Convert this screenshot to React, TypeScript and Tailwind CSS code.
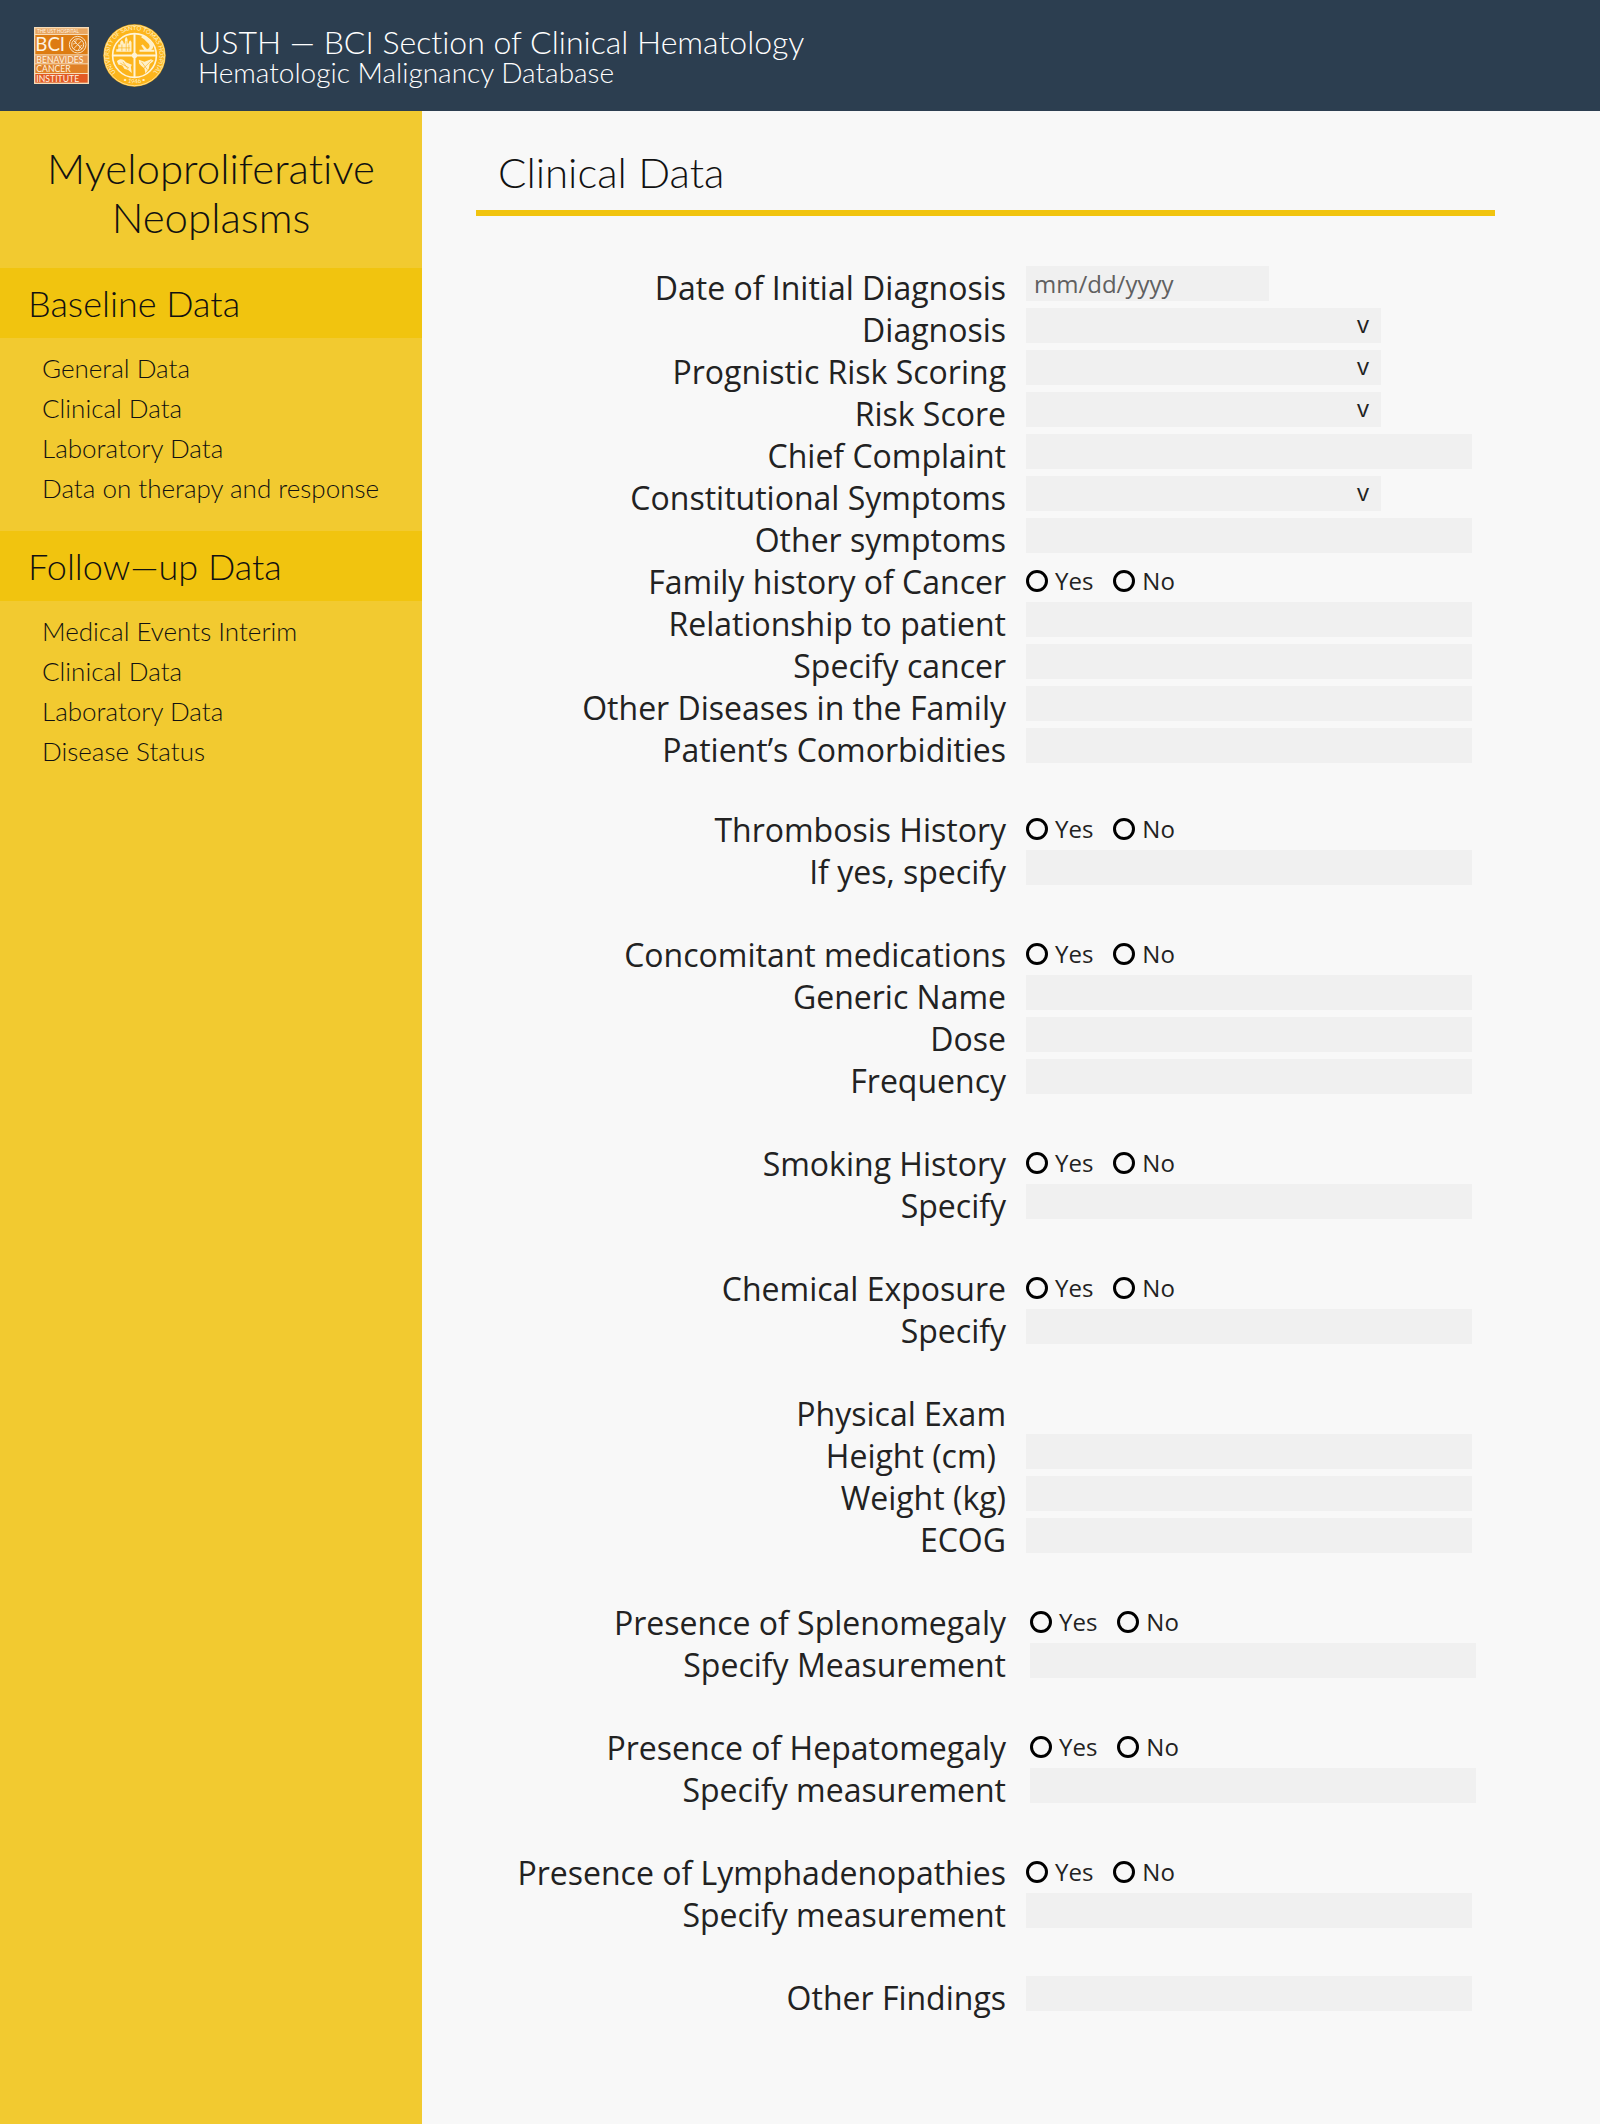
import { useId } from "react";

type Kind = "date" | "select" | "text" | "radio" | "none";
type Row = { label: string; kind: Kind; padded?: boolean };
type Group = { rows: Row[]; shifted?: boolean };

const groups: Group[] = [
  {
    rows: [
      { label: "Date of Initial Diagnosis", kind: "date" },
      { label: "Diagnosis", kind: "select" },
      { label: "Prognistic Risk Scoring", kind: "select" },
      { label: "Risk Score", kind: "select" },
      { label: "Chief Complaint", kind: "text" },
      { label: "Constitutional Symptoms", kind: "select" },
      { label: "Other symptoms", kind: "text" },
      { label: "Family history of Cancer", kind: "radio" },
      { label: "Relationship to patient", kind: "text" },
      { label: "Specify cancer", kind: "text" },
      { label: "Other Diseases in the Family", kind: "text" },
      { label: "Patient’s Comorbidities", kind: "text" },
    ],
  },
  {
    rows: [
      { label: "Thrombosis History", kind: "radio" },
      { label: "If yes, specify", kind: "text" },
    ],
  },
  {
    rows: [
      { label: "Concomitant medications", kind: "radio" },
      { label: "Generic Name", kind: "text" },
      { label: "Dose", kind: "text" },
      { label: "Frequency", kind: "text" },
    ],
  },
  {
    rows: [
      { label: "Smoking History", kind: "radio" },
      { label: "Specify", kind: "text" },
    ],
  },
  {
    rows: [
      { label: "Chemical Exposure", kind: "radio" },
      { label: "Specify", kind: "text" },
    ],
  },
  {
    rows: [
      { label: "Physical Exam", kind: "none" },
      { label: "Height (cm)", kind: "text", padded: true },
      { label: "Weight (kg)", kind: "text" },
      { label: "ECOG", kind: "text" },
    ],
  },
  {
    shifted: true,
    rows: [
      { label: "Presence of Splenomegaly", kind: "radio" },
      { label: "Specify Measurement", kind: "text" },
    ],
  },
  {
    shifted: true,
    rows: [
      { label: "Presence of Hepatomegaly", kind: "radio" },
      { label: "Specify measurement", kind: "text" },
    ],
  },
  {
    rows: [
      { label: "Presence of Lymphadenopathies", kind: "radio" },
      { label: "Specify measurement", kind: "text" },
    ],
  },
  { rows: [{ label: "Other Findings", kind: "text" }] },
];

const menu = [
  {
    title: "Baseline Data",
    items: ["General Data", "Clinical Data", "Laboratory Data", "Data on therapy and response"],
  },
  {
    title: "Follow—up Data",
    items: ["Medical Events Interim", "Clinical Data", "Laboratory Data", "Disease Status"],
  },
];

function InstituteLogo() {
  return (
    <svg viewBox="0 0 165 171" className="h-[57px] w-[55px] shrink-0" role="img" aria-label="Benavides Cancer Institute" fontFamily="Lato, sans-serif">
      <rect width="165" height="171" fill="#f6dcb8" />
      <rect x="4" y="4" width="157" height="17" fill="#e9a660" />
      <rect x="4" y="24" width="157" height="58" fill="#dd7c12" />
      <rect x="4" y="85" width="157" height="24" fill="#e6954a" />
      <rect x="4" y="112" width="157" height="26" fill="#e08026" />
      <rect x="4" y="141" width="157" height="26" fill="#e25a24" />
      <g fill="#fdf3e2">
        <text x="9" y="18" fontSize="14">THE UST HOSPITAL</text>
        <text x="4" y="73" fontSize="56">BCI</text>
        <text x="7" y="107" fontSize="26">BENAVIDES</text>
        <text x="7" y="135" fontSize="26">CANCER</text>
        <text x="7" y="164" fontSize="26">INSTITUTE</text>
      </g>
      <g fill="none" stroke="#f8e2c2" strokeWidth="3">
        <circle cx="131" cy="53" r="25" />
        <circle cx="131" cy="53" r="18" />
        <path d="M118 40l26 26M144 40l-26 26M131 36c-8 6-8 12 0 17s8 11 0 17M116 53c6-6 11-6 15 0s10 6 15 0" />
      </g>
    </svg>
  );
}

function HospitalSeal() {
  return (
    <svg viewBox="0 0 190 190" className="size-[63px] shrink-0" role="img" aria-label="University of Santo Tomas Hospital" fontFamily="Lato, sans-serif">
      <defs>
        <path id="seal-top" d="M42 149A76 76 0 1 1 148 149" />
        <path id="seal-bottom" d="M50 166A84 84 0 0 0 140 166" />
      </defs>
      <circle cx="95" cy="95" r="94" fill="#fdb51c" />
      <circle cx="95" cy="95" r="91" fill="none" stroke="#ffdf8e" strokeWidth="3" />
      <circle cx="95" cy="95" r="66" fill="none" stroke="#fff4d6" strokeWidth="5" />
      <path d="M95 29v132M29 95h132" stroke="#fff4d6" strokeWidth="6" />
      <circle cx="95" cy="95" r="8" fill="#fff4d6" />
      <g fill="#fff0c8">
        <path d="M40 84v-8h6v-14h6v-8l5-6 5 6v5h4V46l4-8 4 8v13h4v-5l4-5 4 5v30z" />
        <path d="M110 84v-6h14l-9-13 5-3 13 14c9-2 10-12 3-18l-12-12-9-6 4-6 12 6 16 16c8 9 5 19-2 22h10v6z" />
        <path d="M42 112c10-9 20-6 27 3l18 8-3 7 3 18-12-10-10-2-7-11-12-3z" />
        <path d="M108 108l17 6 20-8 8 5-12 10-3 14-10 14-3-15-10-8-6-7z" />
      </g>
      <g fill="none" stroke="#fdb51c" strokeWidth="2">
        <path d="M46 72h36M57 62v20M70 52v30M78 62v20M52 118l26 14M60 114l16 22M116 114l18 24M146 110l-24 24" />
      </g>
      <g fill="#fff0c8" fontSize="18">
        <text textAnchor="middle">
          <textPath href="#seal-top" startOffset="50%">UNIVERSITY OF SANTO TOMAS HOSPITAL</textPath>
        </text>
        <text textAnchor="middle">
          <textPath href="#seal-bottom" startOffset="50%">• 1946 •</textPath>
        </text>
      </g>
    </svg>
  );
}

function Radios({ id }: { id: string }) {
  return (
    <div role="radiogroup" aria-labelledby={`${id}-label`} className="flex h-[42px] items-center gap-5">
      {["Yes", "No"].map((option) => (
        <label key={option} className="flex items-center gap-[7px] text-2xl">
          <input
            type="radio"
            name={id}
            value={option}
            className="size-[22px] appearance-none rounded-full border-3 border-black checked:bg-black checked:bg-clip-content checked:p-1"
          />
          {option}
        </label>
      ))}
    </div>
  );
}

function Field({ id, kind }: { id: string; kind: Kind }) {
  if (kind === "radio") return <Radios id={id} />;
  if (kind === "date")
    return (
      <input
        id={id}
        type="text"
        placeholder="mm/dd/yyyy"
        className="block h-[35px] w-[243px] max-w-full bg-[#f0f0f0] px-2 text-2xl placeholder:text-[#606060]"
      />
    );
  if (kind === "select")
    return (
      <div className="relative w-[355px] max-w-full">
        <select id={id} className="block h-[35px] w-full appearance-none bg-[#f0f0f0] px-2 text-2xl">
          <option value=""></option>
        </select>
        <span aria-hidden="true" className="pointer-events-none absolute top-0 right-3 text-2xl leading-8">
          v
        </span>
      </div>
    );
  if (kind === "text") return <input id={id} type="text" className="block h-[35px] w-full bg-[#f0f0f0] px-2 text-2xl" />;
  return null;
}

function FormRow({ row, shifted }: { row: Row; shifted?: boolean }) {
  const id = useId();
  const tone = `text-right text-[32px] leading-[44px] ${row.padded ? "pr-2.5" : ""}`;
  return (
    <div className={`grid h-[42px] grid-cols-[minmax(0,1fr)_minmax(0,446px)] ${shifted ? "-mr-1 gap-x-6" : "gap-x-5"}`}>
      {row.kind === "radio" || row.kind === "none" ? (
        <span id={`${id}-label`} className={tone}>
          {row.label}
        </span>
      ) : (
        <label htmlFor={id} className={tone}>
          {row.label}
        </label>
      )}
      <Field id={id} kind={row.kind} />
    </div>
  );
}

export default function App() {
  return (
    <div className="flex min-h-screen flex-col bg-[#f8f8f8] font-['Open_Sans',sans-serif] text-[#222222]">
      <header className="flex h-[111px] items-center bg-[#2c3e50] pl-[34px] text-white">
        <InstituteLogo />
        <div className="ml-3.5 flex">
          <HospitalSeal />
        </div>
        <div className="ml-8 font-['Lato',sans-serif] font-light [font-variant-ligatures:none]">
          <p className="text-[32px] leading-8">USTH — BCI Section of Clinical Hematology</p>
          <p className="text-[28px] leading-7">Hematologic Malignancy Database</p>
        </div>
      </header>

      <div className="flex flex-1">
        <aside className="w-[422px] shrink-0 bg-[#f2ca30] font-['Lato',sans-serif] font-light text-[#111111] [font-variant-ligatures:none]">
          <h1 className="px-8 pt-[33px] pb-[26px] text-center text-[42px] leading-[49px]">
            Myeloproliferative Neoplasms
          </h1>
          <nav>
            {menu.map((section) => (
              <section key={section.title}>
                <h2 className="bg-[#f1c40f] py-3.5 pl-7 text-[36px] leading-[42px]">{section.title}</h2>
                <ul className="pt-2.5 pb-[23px] pl-[42px] text-[26px] leading-10">
                  {section.items.map((item) => (
                    <li key={item}>
                      <a href="#">{item}</a>
                    </li>
                  ))}
                </ul>
              </section>
            ))}
          </nav>
        </aside>

        <main className="min-w-0 flex-1 pt-9 pr-[105px] pb-16 pl-[54px]">
          <h2 className="border-b-6 border-[#f1c40f] pb-[13px] pl-[22px] font-['Lato',sans-serif] text-[42px] leading-[50px] font-light text-[#111111] [font-variant-ligatures:none]">
            Clinical Data
          </h2>
          <form className="mt-[50px] pr-[23px]">
            {groups.map((group, index) => (
              <section key={index} className="mb-[41px] first:mb-[38px] last:mb-0">
                {group.rows.map((row) => (
                  <FormRow key={row.label} row={row} shifted={group.shifted} />
                ))}
              </section>
            ))}
          </form>
        </main>
      </div>
    </div>
  );
}
